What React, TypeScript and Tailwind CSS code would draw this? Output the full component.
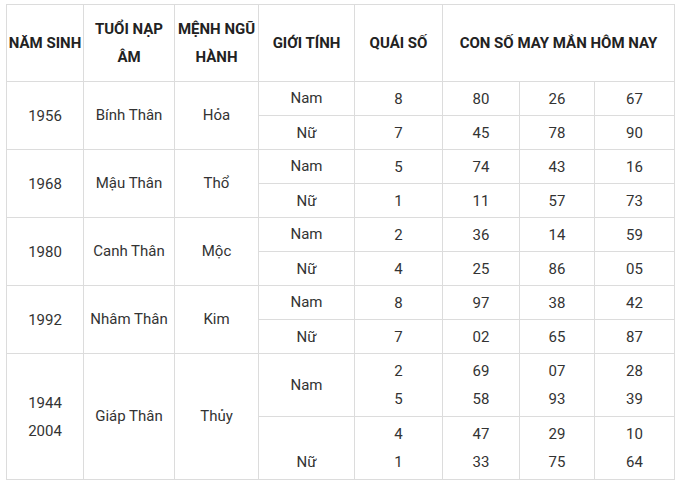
import React from 'react'

const cell = 'flex flex-col items-center justify-center text-center border-r border-b border-[#dcdcdc]'

type Group = { year: string[]; tuoi: string; menh: string; nam: string[][]; nu: string[][] }

const groups: Group[] = [
  { year: ['1956'], tuoi: 'Bính Thân', menh: 'Hỏa', nam: [['8', '80', '26', '67']], nu: [['7', '45', '78', '90']] },
  { year: ['1968'], tuoi: 'Mậu Thân', menh: 'Thổ', nam: [['5', '74', '43', '16']], nu: [['1', '11', '57', '73']] },
  { year: ['1980'], tuoi: 'Canh Thân', menh: 'Mộc', nam: [['2', '36', '14', '59']], nu: [['4', '25', '86', '05']] },
  { year: ['1992'], tuoi: 'Nhâm Thân', menh: 'Kim', nam: [['8', '97', '38', '42']], nu: [['7', '02', '65', '87']] },
  {
    year: ['1944', '2004'],
    tuoi: 'Giáp Thân',
    menh: 'Thủy',
    nam: [['2', '69', '07', '28'], ['5', '58', '93', '39']],
    nu: [['4', '47', '29', '10'], ['1', '33', '75', '64']],
  },
]

function Lines({ items }: { items: string[] }) {
  return (
    <>
      {items.map((t, i) => (
        <span key={i} className="block leading-[28px] min-h-[28px]">{t}</span>
      ))}
    </>
  )
}

export default function App() {
  return (
    <div className="w-[681px] h-[489px] bg-white pt-[4px] pl-[6px]" style={{ fontFamily: 'Roboto, "Liberation Sans", sans-serif' }}>
      <div className="grid w-[669px] grid-cols-[77px_91px_84px_96px_88px_77px_75px_80px] grid-rows-[77px_34px_34px_34px_34px_34px_34px_34px_34px_63px_63px] border-l border-t border-[#dcdcdc] text-[15px] text-[#333]">
        <div className={`${cell} font-bold text-[#222] leading-[28px]`}>NĂM SINH</div>
        <div className={`${cell} font-bold text-[#222] leading-[28px]`}><span>TUỔI NẠP</span><span>ÂM</span></div>
        <div className={`${cell} font-bold text-[#222] leading-[28px]`}><span>MỆNH NGŨ</span><span>HÀNH</span></div>
        <div className={`${cell} font-bold text-[#222] leading-[28px]`}>GIỚI TÍNH</div>
        <div className={`${cell} font-bold text-[#222] leading-[28px]`}>QUÁI SỐ</div>
        <div className={`${cell} col-span-3 font-bold text-[#222] leading-[28px]`}>CON SỐ MAY MẮN HÔM NAY</div>

        {groups.map((g) => (
          <React.Fragment key={g.year.join('-')}>
            <div className={`${cell} row-span-2`}><Lines items={g.year} /></div>
            <div className={`${cell} row-span-2`}>{g.tuoi}</div>
            <div className={`${cell} row-span-2`}>{g.menh}</div>
            <div className={cell}>Nam</div>
            {[0, 1, 2, 3].map((c) => (
              <div key={`nam-${c}`} className={cell}>
                <Lines items={g.nam.map((r) => r[c])} />
              </div>
            ))}
            <div className={`${cell} col-start-4`}>
              <Lines items={g.nu.length > 1 ? ['', 'Nữ'] : ['Nữ']} />
            </div>
            {[0, 1, 2, 3].map((c) => (
              <div key={`nu-${c}`} className={cell}>
                <Lines items={g.nu.map((r) => r[c])} />
              </div>
            ))}
          </React.Fragment>
        ))}
      </div>
    </div>
  )
}
